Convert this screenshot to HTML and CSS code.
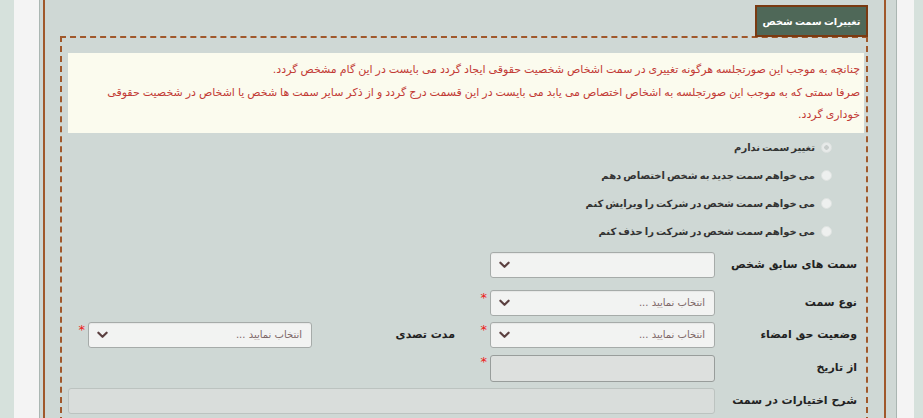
FILE: index.html
```html
<!DOCTYPE html>
<html lang="fa">
<head>
<meta charset="utf-8">
<link rel="stylesheet" href="styles.css">
</head>
<body>
<div class="page">
  <div class="frame">
    <div class="inner">
      <div class="tabbar"><div class="tab">تغییرات سمت شخص</div></div>
      <div class="box">
        <div class="note">
          <p>چنانچه به موجب این صورتجلسه هرگونه تغییری در سمت اشخاص شخصیت حقوقی ایجاد گردد می بایست در این گام مشخص گردد.</p>
          <p>صرفا سمتی که به موجب این صورتجلسه به اشخاص اختصاص می یابد می بایست در این قسمت درج گردد و از ذکر سایر سمت ها شخص یا اشخاص در شخصیت حقوقی خوداری گردد.</p>
        </div>
        <div class="radios">
          <label class="radio"><span class="dot on"></span><span>تغییر سمت ندارم</span></label>
          <label class="radio"><span class="dot"></span><span>می خواهم سمت جدید به شخص اختصاص دهم</span></label>
          <label class="radio"><span class="dot"></span><span>می خواهم سمت شخص در شرکت را ویرایش کنم</span></label>
          <label class="radio"><span class="dot"></span><span>می خواهم سمت شخص در شرکت را حذف کنم</span></label>
        </div>
        <div class="form">
          <div class="lbl r1">سمت های سابق شخص</div>
          <div class="sel r1"><span class="ph"></span><svg class="chev" viewBox="0 0 12 8"><path d="M1.5 1.5 L6 6 L10.5 1.5" /></svg></div>

          <div class="lbl">نوع سمت</div>
          <div class="sel"><span class="ph">انتخاب نمایید ...</span><svg class="chev" viewBox="0 0 12 8"><path d="M1.5 1.5 L6 6 L10.5 1.5" /></svg></div>
          <div class="req"><span class="star">*</span></div>
          <div class="gap3"></div>

          <div class="lbl">وضعیت حق امضاء</div>
          <div class="sel"><span class="ph">انتخاب نمایید ...</span><svg class="chev" viewBox="0 0 12 8"><path d="M1.5 1.5 L6 6 L10.5 1.5" /></svg></div>
          <div class="req"><span class="star">*</span></div>
          <div class="lbl lbl2">مدت تصدی</div>
          <div class="sel"><span class="ph">انتخاب نمایید ...</span><svg class="chev" viewBox="0 0 12 8"><path d="M1.5 1.5 L6 6 L10.5 1.5" /></svg></div>
          <div class="req"><span class="star">*</span></div>

          <div class="lbl">از تاریخ</div>
          <div class="inp dis"></div>
          <div class="req"><span class="star">*</span></div>
          <div class="gap3"></div>

          <div class="lbl">شرح اختیارات در سمت</div>
          <div class="inp wide"></div>
        </div>
      </div>
    </div>
  </div>
</div>
</body>
</html>
```
FILE: styles.css
```css
html, body {
  margin: 0;
  padding: 0;
  height: 100%;
}
body {
  background: #d6e1dc;
  font-family: "DejaVu Sans", Tahoma, sans-serif;
  overflow: hidden;
}
.page {
  margin: 0 9px 0 14px;
  background: #f4f4f4;
  padding: 0 17px 0 25px;
  height: 418px;
}
.frame {
  height: 100%;
  border-left: 1px solid #aab6b2;
  border-right: 1px solid #aab6b2;
  background: #cfd8d5;
  padding: 0 10px 0 3px;
  box-sizing: border-box;
}
.inner {
  height: 100%;
  border-left: 2px solid #a0582b;
  border-right: 2px solid #a0582b;
  background: #cfd8d5;
  padding: 5px 16px 0 15px;
  box-sizing: border-box;
  overflow: hidden;
}
.tabbar {
  display: flex;
  justify-content: flex-end;
}
.tab {
  direction: rtl;
  background: #4f6858;
  border: 2px solid #7a3a12;
  color: #fff;
  font-weight: bold;
  font-size: 9.8px;
  word-spacing: -1px;
  height: 28px;
  width: 109px;
  display: flex;
  align-items: center;
  justify-content: center;
  margin-bottom: -1px;
  position: relative;
}
.box {
  border: 2px dashed #a0582b;
  border-bottom: none;
  height: 400px;
  padding: 15px 2px 0 6px;
  direction: rtl;
}
.note {
  background: #fbfbee;
  color: #c23a35;
  font-size: 11px;
  word-spacing: -0.5px;
  line-height: 22.5px;
  padding: 6px 4px 6px 8px;
}
.note p {
  margin: 0;
}
.radios {
  padding: 1px 32px 0 0;
  display: flex;
  flex-direction: column;
}
.radio {
  display: flex;
  align-items: center;
  gap: 6px;
  height: 28px;
  font-size: 10px;
  word-spacing: -1.5px;
  font-weight: bold;
  color: #333;
}
.dot {
  width: 9px;
  height: 9px;
  border-radius: 50%;
  background: #eef0ef;
  border: 1px solid #dfe3e1;
}
.dot.on {
  background: radial-gradient(circle, #c8cdcb 0 2px, #e7eae9 2.5px);
}
.form {
  display: grid;
  grid-template-columns: 142px 225px 35px 143px 224px 20px;
  padding: 6px 7px 0 0;
  margin-left: -2px;
  row-gap: 6px;
  align-items: center;
}
.lbl {
  font-size: 11px;
  font-weight: bold;
  color: #222;
  grid-column: 1;
}
.lbl2 {
  grid-column: 4;
}
.r1 {
  margin-bottom: 6px;
}
.sel {
  height: 26px;
  box-sizing: border-box;
  border: 1px solid #a6aba9;
  border-radius: 3px;
  background: #f2f3f2;
  box-shadow: inset 0 1px 1px rgba(0,0,0,0.05);
  display: flex;
  align-items: center;
  justify-content: space-between;
  padding: 0 9px 0 8px;
}
.sel.r1 {
  grid-column: 2 / 3;
}
.ph {
  color: #7d6767;
  font-size: 10px;
}
.chev {
  width: 11px;
  height: 8px;
  fill: none;
  stroke: #5b4040;
  stroke-width: 2.4;
  stroke-linecap: round;
  stroke-linejoin: round;
}
.req {
  align-self: start;
  height: 100%;
}
.star {
  display: block;
  color: #ee1a1a;
  font-size: 13px;
  line-height: 1;
  margin-right: 3px;
  margin-top: 1px;
}
.inp {
  height: 27px;
  box-sizing: border-box;
  border-radius: 3px;
}
.inp.dis {
  background: #dde0de;
  border: 1.5px solid #989d9b;
  margin-top: 1px;
}
.inp.wide {
  grid-column: 2 / 7;
  height: 26px;
  background: #d9dddb;
  border: 1px solid #bcc3c0;
}
```
